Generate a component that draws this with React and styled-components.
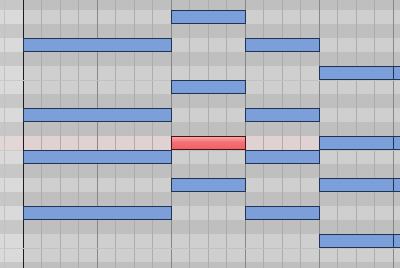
import styled, { createGlobalStyle } from 'styled-components';

const GlobalStyle = createGlobalStyle`
  html, body {
    margin: 0;
    padding: 0;
    overflow: hidden;
    background: #c8c8c8;
    font-family: "Liberation Sans", Arial, sans-serif;
  }
`;

const ROW_H = 14;
const BEAT_W = 74;

// piano pattern top to bottom, 'w' = white key row, 'b' = black key row
const rows = ['b', 'w', 'b', 'w', 'b', 'w', 'w', 'b', 'w', 'b', 'w', 'w', 'b', 'w', 'b', 'w', 'b', 'w', 'w', 'b'];
const splits = [6, 11, 18];
const activeRow = 10;

const notes = [
  { beat: 0, len: 2, row: 3 },
  { beat: 0, len: 2, row: 8 },
  { beat: 0, len: 2, row: 11 },
  { beat: 0, len: 2, row: 15 },
  { beat: 2, len: 1, row: 1 },
  { beat: 2, len: 1, row: 6 },
  { beat: 2, len: 1, row: 10, selected: true },
  { beat: 2, len: 1, row: 13 },
  { beat: 3, len: 1, row: 3 },
  { beat: 3, len: 1, row: 8 },
  { beat: 3, len: 1, row: 11 },
  { beat: 3, len: 1, row: 15 },
  { beat: 4, len: 1, row: 5 },
  { beat: 4, len: 1, row: 10 },
  { beat: 4, len: 1, row: 13 },
  { beat: 4, len: 1, row: 17 },
  { beat: 5, len: 1, row: 5 },
  { beat: 5, len: 1, row: 10 },
  { beat: 5, len: 1, row: 13 },
  { beat: 5, len: 1, row: 17 },
];

const Roll = styled.div`
  display: flex;
  width: 400px;
  height: 268px;
  overflow: hidden;
`;

const Keys = styled.div`
  width: 23px;
  flex: none;
  display: flex;
  flex-direction: column;
  margin-top: -4px;
`;

const KeyRow = styled.div`
  height: ${ROW_H}px;
  flex: none;
  box-sizing: border-box;
  background-color: ${p => (p.$active ? '#e2d6d6' : p.$black ? '#c7c7c7' : '#dadada')};
  background-image: linear-gradient(to right, transparent 4px, #c2c2c2 4px 5px, transparent 5px);
  border-top: ${p => (p.$split ? '1px solid #cacaca' : 'none')};
`;

const Grid = styled.div`
  flex: 1;
  position: relative;
`;

const Lanes = styled.div`
  display: flex;
  flex-direction: column;
  margin-top: -4px;
`;

const Lane = styled.div`
  height: ${ROW_H}px;
  flex: none;
  box-sizing: border-box;
  background-color: ${p => (p.$active ? '#e0d2d2' : p.$black ? '#bfbfbf' : '#cfcfcf')};
  background-image:
    linear-gradient(to right, #1c1c1c 0 1px, transparent 1px),
    repeating-linear-gradient(to right, #888 0 1px, transparent 1px ${BEAT_W}px),
    repeating-linear-gradient(to right, #adadad 0 1px, transparent 1px ${BEAT_W / 4}px);
  border-top: ${p => (p.$split ? '1px solid #c2c2c2' : 'none')};
`;

const Note = styled.div`
  position: absolute;
  height: ${ROW_H}px;
  box-sizing: border-box;
  border: 1px solid ${p => (p.$selected ? '#4a1212' : '#1f3454')};
  background: ${p =>
    p.$selected
      ? 'linear-gradient(to bottom, #fba6a6 0%, #f47074 45%, #ef6266 100%)'
      : '#7d9fd9'};
`;

export default function App() {
  return (
    <>
      <GlobalStyle />
      <Roll>
        <Keys>
          {rows.map((r, i) => (
            <KeyRow key={i} $black={r === 'b'} $split={splits.includes(i)} $active={i === activeRow} />
          ))}
        </Keys>
        <Grid>
          <Lanes>
            {rows.map((r, i) => (
              <Lane key={i} $black={r === 'b'} $split={splits.includes(i)} $active={i === activeRow} />
            ))}
          </Lanes>
          {notes.map((n, i) => (
            <Note
              key={i}
              $selected={n.selected}
              style={{ left: n.beat * BEAT_W, top: n.row * ROW_H - 4, width: n.len * BEAT_W + 1 }}
            />
          ))}
        </Grid>
      </Roll>
    </>
  );
}
